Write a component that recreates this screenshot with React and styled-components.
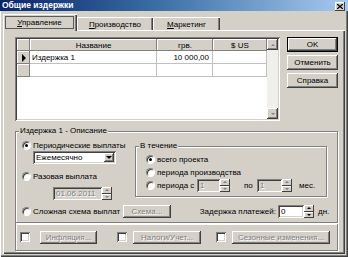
import React from 'react';
import styled, { createGlobalStyle, css } from 'styled-components';

const GlobalStyle = createGlobalStyle`
  html, body { margin: 0; padding: 0; }
  body {
    background: #d4d0c8;
    font-family: "Liberation Sans", Arial, sans-serif;
    font-size: 8px;
    color: #000;
  }
  * { box-sizing: border-box; }
`;

const raised = css`
  box-shadow: inset -1px -1px #404040, inset 1px 1px #ffffff,
    inset -2px -2px #808080, inset 2px 2px #d4d0c8;
`;
const sunken = css`
  box-shadow: inset 1px 1px #808080, inset -1px -1px #ffffff,
    inset 2px 2px #404040, inset -2px -2px #d4d0c8;
`;
const etched = css`
  border: 1px solid #808080;
  box-shadow: inset 1px 1px #ffffff, 1px 1px #ffffff;
`;
const disabledText = css`
  color: #808080;
  text-shadow: 1px 1px #ffffff;
`;

const Window = styled.div`
  width: 348px;
  height: 257px;
  display: flex;
  flex-direction: column;
  background: #d4d0c8;
  overflow: hidden;
  box-shadow: inset 1px 0 #ffffff, inset -1px -1px #404040, inset -2px -2px #808080;
`;

const TitleBar = styled.div`
  height: 11px;
  flex: none;
  display: flex;
  align-items: center;
  justify-content: space-between;
  padding: 0 3px 0 2px;
  background: linear-gradient(90deg, #0a246a 0%, #3a6ea5 45%, #a6caf0 100%);
`;

const Title = styled.span`
  color: #ffffff;
  font-weight: bold;
  font-size: 8.5px;
  line-height: 11px;
`;

const CloseBtn = styled.div`
  width: 10px;
  height: 9px;
  margin-top: 2px;
  display: flex;
  align-items: center;
  justify-content: center;
  background: #d4d0c8;
  box-shadow: inset -1px -1px #404040, inset 1px 1px #ffffff;
`;

const TabStrip = styled.div`
  height: 19px;
  flex: none;
  display: flex;
  align-items: flex-end;
  padding-left: 3px;
`;

const Tab = styled.div`
  position: relative;
  width: ${(p) => p.$w}px;
  height: ${(p) => (p.$active ? 17 : 13)}px;
  margin-bottom: ${(p) => (p.$active ? -1 : 0)}px;
  z-index: ${(p) => (p.$active ? 2 : 0)};
  display: flex;
  align-items: stretch;
  justify-content: center;
  background: #d4d0c8;
  box-shadow: inset 1px 1px #ffffff, inset -1px 0 #404040, inset -2px 0 #808080;
  u { text-decoration: underline; }
`;

const TabLabel = styled.span`
  flex: 1;
  display: flex;
  align-items: center;
  justify-content: center;
  margin: ${(p) => (p.$active ? '2px 3px 2px 2px' : '1px 0 0 0')};
  border: 1px ${(p) => (p.$active ? 'solid #5a5a5a' : 'solid transparent')};
`;

const Panel = styled.div`
  flex: 1;
  margin: 0 3px 3px 3px;
  padding: 7px 0 0 12px;
  display: flex;
  flex-direction: column;
  box-shadow: inset 1px 1px #ffffff, inset -1px -1px #404040, inset -2px -2px #808080;
`;

const TopRow = styled.div`
  display: flex;
  align-items: flex-start;
  gap: 7px;
`;

const Grid = styled.div`
  width: 265px;
  height: 84px;
  padding: 2px;
  display: flex;
  background: #ffffff;
  ${sunken};
`;

const GridBody = styled.div`
  flex: 1;
  display: flex;
  flex-direction: column;
`;

const GridRow = styled.div`
  display: grid;
  grid-template-columns: 13px 127px 56px 54px;
  height: ${(p) => p.$h}px;
`;

const HeadCell = styled.div`
  display: flex;
  align-items: center;
  justify-content: ${(p) => p.$align || 'center'};
  padding: 0 3px;
  background: #d4d0c8;
  box-shadow: inset -1px -1px #808080, inset 1px 1px #ffffff;
`;

const Pointer = styled.span`
  width: 0;
  height: 0;
  border-left: 4px solid #000;
  border-top: 4px solid transparent;
  border-bottom: 4px solid transparent;
`;

const DataCell = styled.div`
  display: flex;
  align-items: center;
  justify-content: ${(p) => p.$align || 'flex-start'};
  padding: 0 3px 0 2px;
  background: #ffffff;
  border-right: 1px solid #c0c0c0;
  border-bottom: 1px solid #c0c0c0;
`;

const ScrollBar = styled.div`
  width: 11px;
  display: flex;
  flex-direction: column;
  background: #f1efeb;
`;

const ScrollTrack = styled.div`
  flex: 1;
`;

const ArrowBtn = styled.div`
  height: ${(p) => p.$h || 11}px;
  display: flex;
  align-items: center;
  justify-content: center;
  background: #d4d0c8;
  ${raised};
`;

const Arrow = styled.span`
  width: 0;
  height: 0;
  border-left: ${(p) => p.$s}px solid transparent;
  border-right: ${(p) => p.$s}px solid transparent;
  ${(p) =>
    p.$up
      ? `border-bottom: ${p.$s}px solid ${p.$c || '#000'};`
      : `border-top: ${p.$s}px solid ${p.$c || '#000'};`}
`;

const ButtonsCol = styled.div`
  width: 51px;
  display: flex;
  flex-direction: column;
  gap: 3px;
`;

const Button = styled.button`
  appearance: none;
  border: none;
  margin: 0;
  padding: 0;
  font: inherit;
  width: ${(p) => (p.$w ? `${p.$w}px` : '100%')};
  height: ${(p) => p.$h || 15}px;
  flex: none;
  background: #d4d0c8;
  color: #000;
  ${(p) => p.$disabled && disabledText};
  ${(p) =>
    p.$default
      ? `box-shadow: inset 0 0 0 1px #000, inset -2px -2px #404040, inset 2px 2px #ffffff, inset -3px -3px #808080;`
      : `box-shadow: inset -1px -1px #404040, inset 1px 1px #ffffff, inset -2px -2px #808080;`}
`;

const GroupBox = styled.div`
  position: relative;
  width: ${(p) => p.$w}px;
  height: ${(p) => p.$h}px;
  margin-top: ${(p) => p.$mt || 0}px;
  padding: ${(p) => p.$pad};
  flex: none;
  ${etched};
`;

const GroupTitle = styled.span`
  position: absolute;
  top: -6px;
  left: 3px;
  padding: 0 1px;
  line-height: 10px;
  background: #d4d0c8;
`;

const TopSection = styled.div`
  display: flex;
  align-items: flex-start;
  height: 60px;
`;

const LeftCol = styled.div`
  width: 113px;
  display: flex;
  flex-direction: column;
`;

const Row = styled.div`
  display: flex;
  align-items: center;
  height: ${(p) => p.$h || 13}px;
  margin-top: ${(p) => p.$mt || 0}px;
  margin-left: ${(p) => p.$ml || 0}px;
`;

const Radio = styled.span`
  position: relative;
  width: 9px;
  height: 9px;
  flex: none;
  margin-right: 2px;
  border-radius: 50%;
  background: #ffffff;
  border: 1px solid;
  border-color: #808080 #ffffff #ffffff #808080;
  box-shadow: inset 1px 1px #404040;
  &::after {
    content: '';
    display: ${(p) => (p.$checked ? 'block' : 'none')};
    position: absolute;
    left: 2px;
    top: 2px;
    width: 3px;
    height: 3px;
    border-radius: 50%;
    background: #000;
  }
`;

const Label = styled.span`
  white-space: nowrap;
  width: ${(p) => (p.$w ? `${p.$w}px` : 'auto')};
  margin-left: ${(p) => p.$ml || 0}px;
  flex: none;
  text-align: ${(p) => p.$align || 'left'};
`;

const Select = styled.div`
  width: 83px;
  height: 13px;
  margin: 1px 0 0 11px;
  padding: 2px;
  display: flex;
  align-items: stretch;
  background: #ffffff;
  ${sunken};
`;

const SelectText = styled.span`
  flex: 1;
  display: flex;
  align-items: center;
  padding-left: 1px;
`;

const SelectBtn = styled.div`
  width: 10px;
  display: flex;
  align-items: center;
  justify-content: center;
  background: #d4d0c8;
  ${raised};
`;

const Field = styled.div`
  width: ${(p) => p.$w}px;
  height: 13px;
  flex: none;
  margin-left: ${(p) => p.$ml || 0}px;
  padding-left: 3px;
  display: flex;
  align-items: center;
  background: ${(p) => (p.$disabled ? '#d4d0c8' : '#ffffff')};
  ${(p) => p.$disabled && disabledText};
  ${sunken};
`;

const Spinner = styled.div`
  width: 10px;
  height: 13px;
  flex: none;
  display: flex;
  flex-direction: column;
`;

const SpinHalf = styled.div`
  flex: 1;
  display: flex;
  align-items: center;
  justify-content: center;
  background: #d4d0c8;
  box-shadow: inset -1px -1px #404040, inset 1px 1px #ffffff;
`;

const BottomBox = styled.div`
  width: 323px;
  height: 28px;
  flex: none;
  display: flex;
  align-items: center;
  padding-left: 4px;
  ${etched};
`;

const Check = styled.span`
  width: 10px;
  height: 10px;
  flex: none;
  margin-left: ${(p) => p.$ml || 0}px;
  margin-right: ${(p) => p.$mr || 0}px;
  background: #ffffff;
  ${sunken};
`;

const Spin = ({ disabled }) => (
  <Spinner>
    <SpinHalf>
      <Arrow $up $s={2} $c={disabled ? '#808080' : '#000'} />
    </SpinHalf>
    <SpinHalf>
      <Arrow $s={2} $c={disabled ? '#808080' : '#000'} />
    </SpinHalf>
  </Spinner>
);

const App = () => (
  <>
    <GlobalStyle />
    <Window>
      <TitleBar>
        <Title>Общие издержки</Title>
        <CloseBtn>
          <svg width="6" height="5" viewBox="0 0 6 5">
            <path d="M0 0L6 5M6 0L0 5" stroke="#000" strokeWidth="1.3" />
          </svg>
        </CloseBtn>
      </TitleBar>

      <TabStrip>
        <Tab $active $w={74}>
          <TabLabel $active>
            <span><u>У</u>правление</span>
          </TabLabel>
        </Tab>
        <Tab $w={76}>
          <TabLabel>
            <span><u>П</u>роизводство</span>
          </TabLabel>
        </Tab>
        <Tab $w={67}>
          <TabLabel>
            <span><u>М</u>аркетинг</span>
          </TabLabel>
        </Tab>
      </TabStrip>

      <Panel>
        <TopRow>
          <Grid>
            <GridBody>
              <GridRow $h={12}>
                <HeadCell />
                <HeadCell>Название</HeadCell>
                <HeadCell>грв.</HeadCell>
                <HeadCell>$ US</HeadCell>
              </GridRow>
              <GridRow $h={13}>
                <HeadCell>
                  <Pointer />
                </HeadCell>
                <DataCell>Издержка 1</DataCell>
                <DataCell $align="flex-end">10 000,00</DataCell>
                <DataCell />
              </GridRow>
              <GridRow $h={13}>
                <HeadCell />
                <DataCell />
                <DataCell />
                <DataCell />
              </GridRow>
            </GridBody>
            <ScrollBar>
              <ArrowBtn>
                <Arrow $up $s={2} $c="#808080" />
              </ArrowBtn>
              <ScrollTrack />
              <ArrowBtn>
                <Arrow $s={2} $c="#808080" />
              </ArrowBtn>
            </ScrollBar>
          </Grid>

          <ButtonsCol>
            <Button $default>OK</Button>
            <Button>Отменить</Button>
            <Button>Справка</Button>
          </ButtonsCol>
        </TopRow>

        <GroupBox $w={323} $h={92} $mt={10} $pad="8px 10px 0 6px">
          <GroupTitle>Издержка 1 - Описание</GroupTitle>
          <TopSection>
            <LeftCol>
              <Row $h={10}>
                <Radio $checked />
                <Label>Периодические выплаты</Label>
              </Row>
              <Select>
                <SelectText>Ежемесячно</SelectText>
                <SelectBtn>
                  <Arrow $s={3} />
                </SelectBtn>
              </Select>
              <Row $h={10} $mt={7}>
                <Radio />
                <Label>Разовая выплата</Label>
              </Row>
              <Row $mt={6} $ml={31}>
                <Field $w={49} $disabled>01.06.2011</Field>
                <Spin disabled />
              </Row>
            </LeftCol>

            <GroupBox $w={192} $h={51} $mt={6} $pad="6px 0 0 10px">
              <GroupTitle>В течение</GroupTitle>
              <Row>
                <Radio $checked />
                <Label>всего проекта</Label>
              </Row>
              <Row>
                <Radio />
                <Label>периода производства</Label>
              </Row>
              <Row>
                <Radio />
                <Label $w={40}>периода с</Label>
                <Field $w={23} $disabled>1</Field>
                <Spin disabled />
                <Label $w={13} $ml={14}>по</Label>
                <Field $w={25} $disabled>1</Field>
                <Spin disabled />
                <Label $ml={7}>мес.</Label>
              </Row>
            </GroupBox>
          </TopSection>

          <Row $mt={5}>
            <Radio />
            <Label $w={90}>Сложная схема выплат</Label>
            <Button $w={48} $h={13} $disabled>Схема...</Button>
            <Label $w={77} $ml={28} $align="right">Задержка платежей:</Label>
            <Field $w={26} $ml={2}>0</Field>
            <Spin />
            <Label $ml={4}>дн.</Label>
          </Row>
        </GroupBox>

        <BottomBox>
          <Check $mr={10} />
          <Button $w={57} $h={13} $disabled>Инфляция...</Button>
          <Check $ml={20} $mr={6} />
          <Button $w={68} $h={13} $disabled>Налоги/Учет...</Button>
          <Check $ml={15} $mr={6} />
          <Button $w={98} $h={13} $disabled>Сезонные изменения...</Button>
        </BottomBox>
      </Panel>
    </Window>
  </>
);

export default App;
